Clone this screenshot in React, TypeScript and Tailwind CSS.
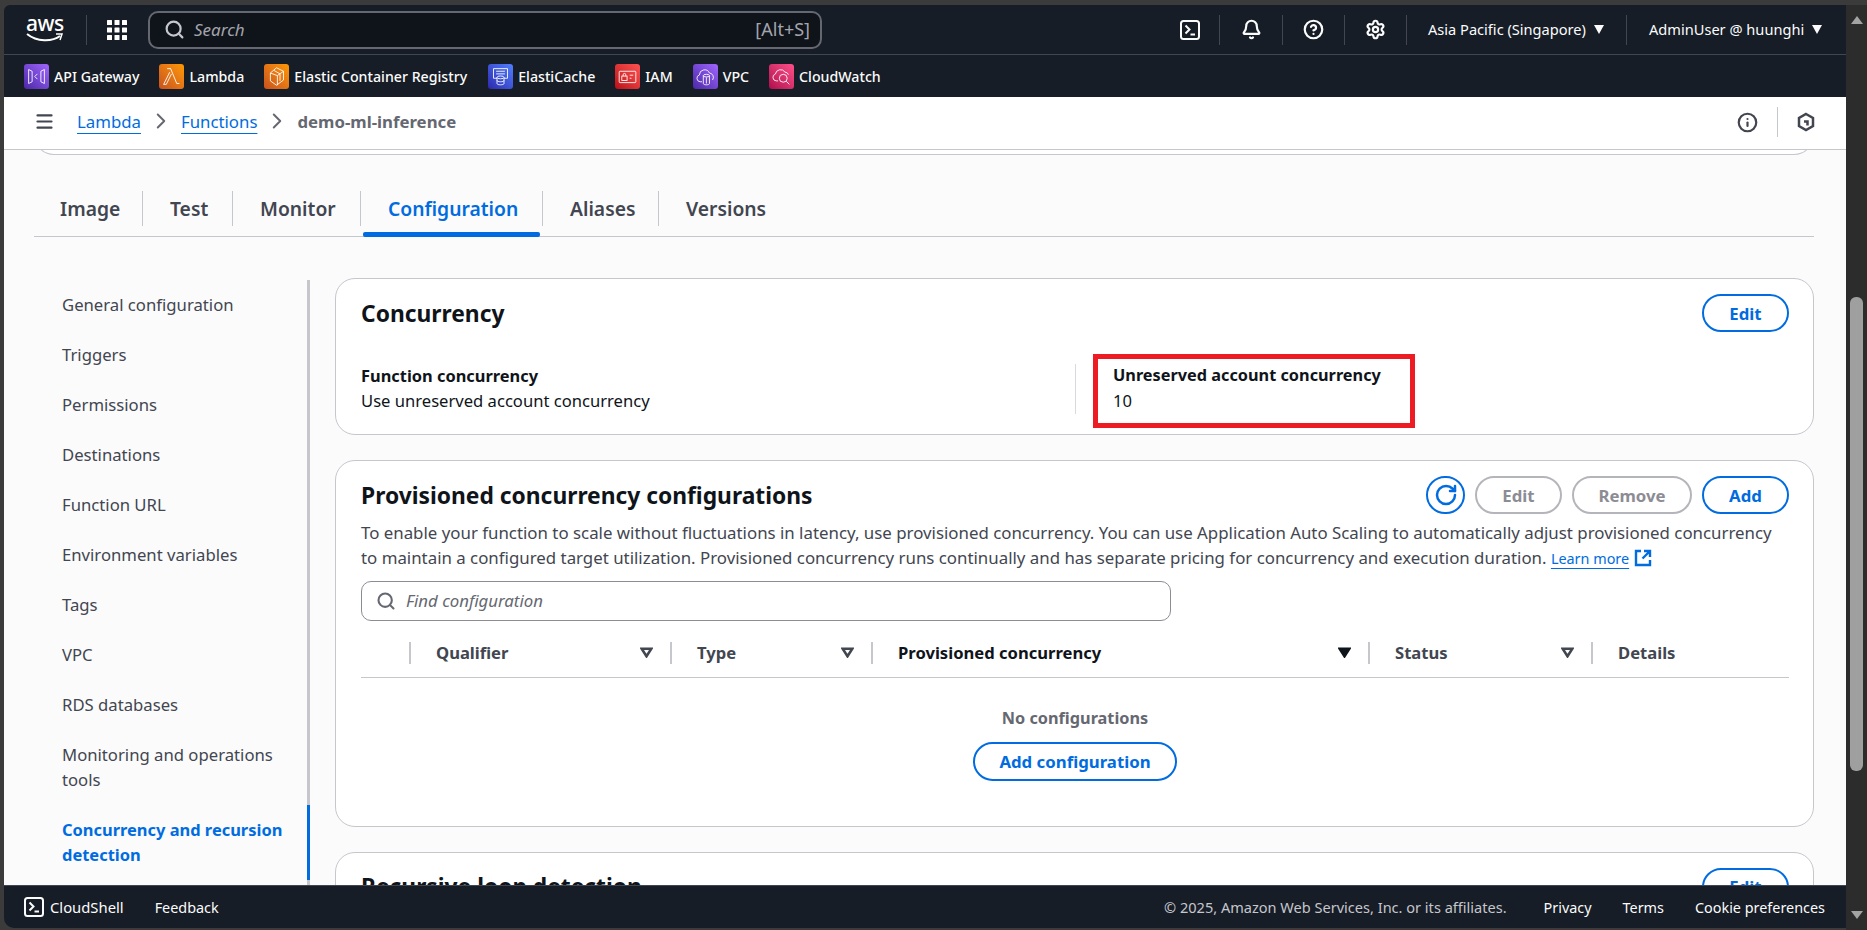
import React from 'react';
import { Bell, ChevronRight, CircleHelp, Info, Menu, RotateCw, Search, Settings } from 'lucide-react';

const favorites = [
  { name: 'API Gateway', tone: 'from-[#4d27a8] to-[#a166ff]', icon: 'gateway', gap: 'mr-[20px]' },
  { name: 'Lambda', tone: 'from-[#c8511b] to-[#ff9900]', icon: 'lambda', gap: 'mr-[20px]' },
  { name: 'Elastic Container Registry', tone: 'from-[#c8511b] to-[#ff9900]', icon: 'ecr', gap: 'mr-[21px]' },
  { name: 'ElastiCache', tone: 'from-[#2e27ad] to-[#527fff]', icon: 'cache', gap: 'mr-[20px]' },
  { name: 'IAM', tone: 'from-[#bd0816] to-[#ff5252]', icon: 'iam', gap: 'mr-[20px]' },
  { name: 'VPC', tone: 'from-[#4d27a8] to-[#a166ff]', icon: 'vpc', gap: 'mr-[20px]' },
  { name: 'CloudWatch', tone: 'from-[#b0084d] to-[#ff4f8b]', icon: 'watch', gap: '' },
];

const navItems = [
  'General configuration',
  'Triggers',
  'Permissions',
  'Destinations',
  'Function URL',
  'Environment variables',
  'Tags',
  'VPC',
  'RDS databases',
  'Monitoring and operations tools',
];

const tabs = [
  { name: 'Image', width: 'w-[109px]' },
  { name: 'Test', width: 'w-[90px]' },
  { name: 'Monitor', width: 'w-[128px]' },
  { name: 'Configuration', width: 'w-[182px]', active: true },
  { name: 'Aliases', width: 'w-[116px]' },
  { name: 'Versions', width: 'w-[120px]' },
];

const columns = [
  { name: 'Qualifier', width: 'w-[261px]', sort: true },
  { name: 'Type', width: 'w-[201px]', sort: true },
  { name: 'Provisioned concurrency', width: 'w-[497px]', sorted: true },
  { name: 'Status', width: 'w-[223px]', sort: true },
  { name: 'Details', width: 'w-[197px]' },
];

function FavIcon({ icon }: { icon: string }) {
  return (
    <svg viewBox="0 0 24 24" className="w-[21px] h-[21px]" fill="none" stroke="white" strokeWidth="1">
      {icon === 'gateway' && (
        <>
          <path d="M3 4l4 2v12l-4 2zM21 4l-4 2v12l4 2z" />
          <path d="M13 9l-3 3 3 3" />
        </>
      )}
      {icon === 'lambda' && <path d="M7 3h4l7 17h3M11 3l-1 0M12 9L6 21H3l7-14" />}
      {icon === 'ecr' && <path d="M12 2l8 4v10l-8 6-7-5V8zM5 8l8 3v11M13 11l7-5M9 5l7 4v8" />}
      {icon === 'cache' && (
        <>
          <path d="M4 3h16v11h-4M4 3v11h4M7 6h10M7 9h10" />
          <ellipse cx="12" cy="13" rx="4" ry="1.6" />
          <path d="M8 13v7c0 2 8 2 8 0v-7M8 16.5c0 2 8 2 8 0" />
        </>
      )}
      {icon === 'iam' && (
        <>
          <rect x="2.5" y="6" width="19" height="13" rx="1" />
          <rect x="5.5" y="11.5" width="6" height="5" />
          <path d="M7 11.5V10a1.5 1.5 0 013 0v1.5M14.5 10.5h4M14.5 14h2" />
        </>
      )}
      {icon === 'vpc' && (
        <>
          <path d="M8 18H6a4 4 0 01-1-7.8A6 6 0 0116.5 8 5 5 0 0120 16" />
          <ellipse cx="13" cy="11" rx="3.5" ry="1.5" />
          <path d="M9.500 11v9c0 2 7 2 7 0v-9M13 13v7" />
        </>
      )}
      {icon === 'watch' && (
        <>
          <path d="M8 17H6a4 4 0 01-1-7.800A6 6 0 0116 7a4.500 4.500 0 014 3" />
          <circle cx="14" cy="14" r="4.500" />
          <path d="M17.500 17.500L21 21" />
        </>
      )}
    </svg>
  );
}

function TerminalIcon({ className }: { className: string }) {
  return (
    <svg viewBox="0 0 20 20" className={className} fill="none" stroke="currentColor" strokeWidth="2">
      <rect x="1" y="1" width="18" height="18" rx="2.500" />
      <path d="M5.500 5.500L9.500 9.500 5.500 13.500M10.500 14.500H15" />
    </svg>
  );
}

function Caret({ filled }: { filled?: boolean }) {
  return (
    <svg viewBox="0 0 12 10" className="w-[13px] h-[11px]" fill={filled ? '#0f141a' : 'none'} stroke={filled ? '#0f141a' : '#424650'} strokeWidth="2.400">
      <path d="M1.500 1.500h9L6 8.500z" />
    </svg>
  );
}

function DownArrow() {
  return (
    <svg viewBox="0 0 10 9" className="w-[10px] h-[9px]" fill="#fbfbfb">
      <path d="M0 0h10L5 9z" />
    </svg>
  );
}

function Button({ children, disabled, className = '' }: { children: React.ReactNode; disabled?: boolean; className?: string }) {
  return (
    <button
      className={`h-[38px] rounded-[20px] border-2 bg-white text-[16.800px] font-bold flex items-center justify-center ${disabled ? 'border-[#b4b4bb] text-[#8c8c94]' : 'border-[#006ce0] text-[#006ce0]'} ${className}`}
    >
      {children}
    </button>
  );
}

export default function App() {
  return (
    <div className="h-[930px] overflow-hidden bg-[#3b3b3b] pt-[5px] pl-[4px] flex font-['Noto_Sans',sans-serif] text-[16.600px] leading-[25px] text-[#424650]">
      <div className="flex-1 min-w-0 h-[923px] rounded-bl-[10px] rounded-tl-[6px] overflow-hidden flex flex-col">
        <header className="h-[50px] shrink-0 bg-[#161d26] border-b border-[#424650] flex items-center justify-between text-[#fbfbfb]">
          <div className="flex items-center">
            <div className="w-[38px] h-[26px] ml-[22px] relative">
              <span className="absolute left-[0px] top-[-8px] text-[21px] leading-[28px] font-medium tracking-[-0.5px] text-white">aws</span>
              <svg viewBox="0 0 38 10" className="absolute left-0 bottom-0 w-[38px] h-[10px]" fill="none">
                <path d="M1 1c10 8 25 8 33 2" stroke="white" strokeWidth="2" />
                <path d="M30 1h6l-2 6" stroke="white" strokeWidth="1.500" />
              </svg>
            </div>
            <div className="w-px h-[30px] bg-[#424650] ml-[22px]" />
            <svg viewBox="0 0 20 20" className="w-[20px] h-[20px] ml-[20px]" fill="white">
              {[0, 7.5, 15].map((y) => [0, 7.5, 15].map((x) => <rect key={`${x}-${y}`} x={x} y={y} width="5" height="5" rx="0.5" />))}
            </svg>
            <div className="w-[674px] h-[38px] ml-[21px] rounded-[10px] border-2 border-[#656871] bg-[#0f141a] flex items-center pl-[14px] pr-[10px]">
              <Search className="w-[21px] h-[21px] text-[#c6c6cd]" strokeWidth={2.500} />
              <span className="ml-[9px] italic text-[17px] text-[#a4a4ad] flex-1">Search</span>
              <span className="text-[#a4a4ad] text-[18px]">[Alt+S]</span>
            </div>
          </div>
          <div className="flex items-center text-[14.600px]">
            <div className="w-[60px] h-[30px] border-r border-[#424650] flex items-center justify-center">
              <TerminalIcon className="w-[20px] h-[20px]" />
            </div>
            <div className="w-[63px] h-[30px] border-r border-[#424650] flex items-center justify-center">
              <Bell className="w-[21px] h-[21px]" strokeWidth={2.500} />
            </div>
            <div className="w-[62px] h-[30px] border-r border-[#424650] flex items-center justify-center">
              <CircleHelp className="w-[21px] h-[21px]" strokeWidth={2.500} />
            </div>
            <div className="w-[62px] h-[30px] border-r border-[#424650] flex items-center justify-center">
              <Settings className="w-[21px] h-[21px]" strokeWidth={2.500} />
            </div>
            <div className="w-[220px] h-[30px] border-r border-[#424650] flex items-center pl-[21px]">
              <span className="w-[161px] whitespace-nowrap">Asia Pacific (Singapore)</span>
              <span className="ml-[5px]"><DownArrow /></span>
            </div>
            <div className="w-[219px] h-[30px] flex items-center pl-[22px]">
              <span className="w-[155px] whitespace-nowrap">AdminUser @ huunghi</span>
              <span className="ml-[8px]"><DownArrow /></span>
            </div>
          </div>
        </header>

        <nav className="h-[42px] shrink-0 bg-[#161d26] flex items-center pl-[20px] text-[14.200px] font-medium text-[#fbfbfb] whitespace-nowrap">
          {favorites.map((f) => (
            <div key={f.name} className={`flex items-center gap-[5px] ${f.gap}`}>
              <div className={`w-[25px] h-[25px] rounded-[3px] bg-linear-to-tr flex items-center justify-center ${f.tone}`}>
                <FavIcon icon={f.icon} />
              </div>
              <span>{f.name}</span>
            </div>
          ))}
        </nav>

        <div className="relative z-10 h-[53px] shrink-0 bg-white border-b border-[#c6c6cd] flex items-center justify-between pl-[30px] pr-[30px] pb-[4px] text-[16.800px]">
          <div className="flex items-center">
            <Menu className="w-[21px] h-[21px] text-[#424650]" strokeWidth={2.500} />
            <a className="ml-[22px] text-[#006ce0] underline underline-offset-[5px]">Lambda</a>
            <ChevronRight className="w-[26px] h-[26px] mx-[7px] text-[#656871]" strokeWidth={1.800} />
            <a className="text-[#006ce0] underline underline-offset-[5px]">Functions</a>
            <ChevronRight className="w-[26px] h-[26px] mx-[7px] text-[#656871]" strokeWidth={1.800} />
            <span className="font-bold text-[#656871]">demo-ml-inference</span>
          </div>
          <div className="flex items-center translate-y-px">
            <Info className="w-[21px] h-[21px] text-[#424650]" strokeWidth={2.500} />
            <div className="w-px h-[30px] bg-[#c6c6cd] ml-[19px]" />
            <svg viewBox="0 0 20 20" className="w-[20px] h-[20px] ml-[18px] text-[#424650]" fill="none" stroke="currentColor" strokeWidth="2.500">
              <path d="M10 2l7 4v8l-7 4-7-4V6z" />
              <path d="M8 9.500h3.500v4" />
            </svg>
          </div>
        </div>

        <main className="flex-1 min-h-0 overflow-hidden bg-[#fbfbfc] pl-[30px] pr-[32px]">
          <div className="-mt-[20px] h-[25px] rounded-b-[20px] border border-t-0 border-[#c6c6cd] bg-white" />

          <div className="mt-[36px] h-[46px] border-b border-[#c6c6cd] flex relative">
            {tabs.map((t, i) => (
              <div key={t.name} className={`relative h-[35px] flex items-center text-[19.300px] font-semibold ${t.width} ${i < tabs.length - 1 ? 'border-r border-[#c6c6cd]' : ''} ${i === 0 ? 'pl-[26px]' : 'pl-[27px]'} ${t.active ? 'text-[#006ce0]' : 'text-[#424650]'}`}>
                {t.name}
                {t.active && <span className="absolute left-[2px] right-[2px] top-[41px] h-[5px] rounded-[2px] bg-[#006ce0]" />}
              </div>
            ))}
          </div>

          <div className="mt-[41px] flex items-start">
            <aside className="w-[276px] shrink-0 mt-[2px] mr-[25px] border-r-[3px] border-[#c6c6cd] h-[640px] text-[16.700px]">
              {navItems.map((n) => (
                <div key={n} className="pl-[28px] pr-[30px] pt-[11.5px] pb-[13.5px]">{n}</div>
              ))}
              <div className="pl-[28px] pr-[8px] pt-[11.5px] pb-[13.5px] -mr-[3px] border-r-[3px] border-[#006ce0] text-[#006ce0] font-bold text-[16.450px]">
                Concurrency and recursion detection
              </div>
            </aside>

            <div className="flex-1 min-w-0 flex flex-col gap-[25px]">
              <section className="rounded-[20px] border border-[#c6c6cd] bg-white pl-[25px] pr-[24px] pt-[15px] pb-[20px]">
                <div className="flex items-center justify-between h-[38px]">
                  <h2 className="text-[22.800px] font-bold text-[#0f141a]">Concurrency</h2>
                  <Button className="w-[87px]">Edit</Button>
                </div>
                <div className="mt-[32px] grid grid-cols-2 text-[#0f141a]">
                  <div className="-translate-y-px">
                    <div className="font-bold text-[16.400px]">Function concurrency</div>
                    <div>Use unreserved account concurrency</div>
                  </div>
                  <div className="relative border-l border-[#d9d9de] pl-[37px]">
                    <div className="-translate-y-px">
                      <div className="font-bold text-[16.300px]">Unreserved account concurrency</div>
                      <div>10</div>
                    </div>
                    <div className="absolute left-[17px] -top-[10px] w-[322px] h-[74px] border-[5px] border-[#ed1c24]" />
                  </div>
                </div>
              </section>

              <section className="rounded-[20px] border border-[#c6c6cd] bg-white pl-[25px] pr-[24px] pt-[15px] pb-[45px]">
                <div className="flex items-center justify-between h-[38px]">
                  <h2 className="text-[22.800px] font-bold text-[#0f141a]">Provisioned concurrency configurations</h2>
                  <div className="flex items-center gap-[10px]">
                    <Button className="w-[39px]">
                      <RotateCw className="w-[24px] h-[24px]" strokeWidth={2.500} />
                    </Button>
                    <Button disabled className="w-[87px]">Edit</Button>
                    <Button disabled className="w-[120px]">Remove</Button>
                    <Button className="w-[87px]">Add</Button>
                  </div>
                </div>
                <p className="mt-[6px] h-[50px] text-[#424650] text-[16.850px]">
                  To enable your function to scale without fluctuations in latency, use provisioned concurrency. You can use Application Auto Scaling to automatically adjust provisioned concurrency to maintain a configured target utilization. Provisioned concurrency runs continually and has separate pricing for concurrency and execution duration.{' '}
                  <a className="text-[14.400px] text-[#006ce0] underline underline-offset-[4px]">Learn more</a>{' '}
                  <svg viewBox="0 0 18 18" className="inline w-[18px] h-[18px] align-[-3px]" fill="none" stroke="#006ce0" strokeWidth="2.400">
                    <path d="M7 2H2v14h14v-5M10 2h6v6M16 2L8.500 9.500" />
                  </svg>
                </p>
                <div className="mt-[10.5px] w-[810px] h-[40px] rounded-[10px] border border-[#8c8c94] flex items-center pl-[14px]">
                  <Search className="w-[20px] h-[20px] text-[#656871]" strokeWidth={2.500} />
                  <span className="ml-[10px] italic text-[#656871] text-[16.800px]">Find configuration</span>
                </div>
                <div className="pt-[21px] pb-[13px] border-b border-[#c6c6cd] flex pl-[48px]">
                  {columns.map((c) => (
                    <div key={c.name} className={`h-[22px] shrink-0 border-l-2 border-[#c6c6cd] pl-[25px] pr-[17px] flex items-center justify-between font-bold ${c.width} ${c.sorted ? 'text-[#0f141a]' : 'text-[#424650]'}`}>
                      <span>{c.name}</span>
                      {c.sort && <Caret />}
                      {c.sorted && <Caret filled />}
                    </div>
                  ))}
                </div>
                <div className="pt-[28.5px] flex flex-col items-center">
                  <div className="font-bold text-[#656871] text-[16.300px]">No configurations</div>
                  <Button className="mt-[10.5px] w-[204px] h-[39px]">Add configuration</Button>
                </div>
              </section>

              <section className="rounded-[20px] border border-[#c6c6cd] bg-white pl-[25px] pr-[24px] pt-[15px] pb-[20px]">
                <div className="flex items-center justify-between h-[38px]">
                  <h2 className="text-[22.800px] font-bold text-[#0f141a]">Recursive loop detection</h2>
                  <Button className="w-[87px]">Edit</Button>
                </div>
              </section>
            </div>
          </div>
        </main>

        <footer className="relative z-10 h-[43px] shrink-0 bg-[#161d26] border-t border-[#424650] flex items-center justify-between pl-[20px] pr-[21px] text-[14.400px] text-[#fbfbfb] whitespace-nowrap">
          <div className="flex items-center">
            <TerminalIcon className="w-[20px] h-[20px]" />
            <span className="ml-[6px] text-[14.800px]">CloudShell</span>
            <span className="ml-[31px]">Feedback</span>
          </div>
          <div className="flex items-center">
            <span className="text-[#c6c6cd] text-[14.550px]">© 2025, Amazon Web Services, Inc. or its affiliates.</span>
            <span className="ml-[37px]">Privacy</span>
            <span className="ml-[31px]">Terms</span>
            <span className="ml-[31px]">Cookie preferences</span>
          </div>
        </footer>
      </div>

      <div className="w-[21px] shrink-0 h-[925px] bg-[#2c2c2c] flex flex-col items-center relative">
        <span className="mt-[11px] w-0 h-0 border-x-[6px] border-x-transparent border-b-[8px] border-b-[#a3a3a3]" />
        <div className="absolute left-[4px] top-[292px] w-[13px] h-[474px] rounded-[6px] bg-[#9f9f9f]" />
        <span className="absolute bottom-[11px] w-0 h-0 border-x-[6px] border-x-transparent border-t-[8px] border-t-[#a3a3a3]" />
      </div>
    </div>
  );
}
